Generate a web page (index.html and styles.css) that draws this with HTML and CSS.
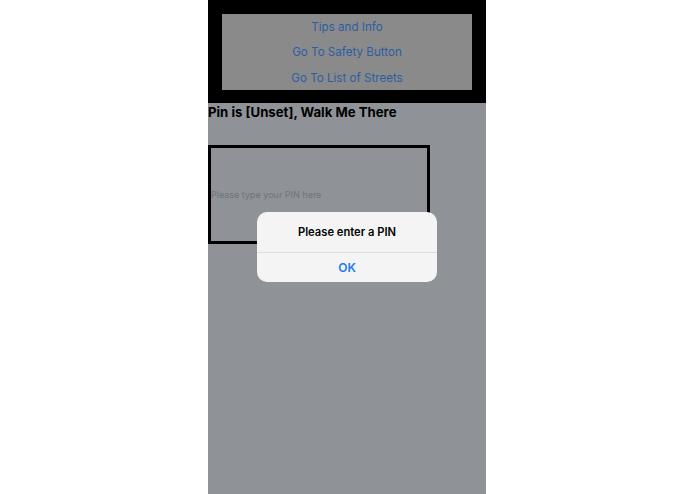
FILE: index.html
```html
<!DOCTYPE html>
<html lang="en">
<head>
<meta charset="utf-8">
<title>Walk Me There</title>
<link rel="stylesheet" href="styles.css">
</head>
<body>
<div class="phone">
  <header class="topbar">
    <nav class="menu">
      <a class="menu-item" href="#">Tips and Info</a>
      <a class="menu-item" href="#">Go To Safety Button</a>
      <a class="menu-item" href="#">Go To List of Streets</a>
    </nav>
  </header>
  <main class="content">
    <h1 class="title">Pin is [Unset], Walk Me There</h1>
    <div class="pin-box">
      <input class="pin-input" type="text" placeholder="Please type your PIN here">
    </div>
  </main>
  <div class="overlay">
    <div class="alert">
      <div class="alert-title">Please enter a PIN</div>
      <div class="alert-action">OK</div>
    </div>
  </div>
</div>
</body>
</html>
```

FILE: styles.css
```css
html, body {
  margin: 0;
  padding: 0;
  background: #ffffff;
  height: 100%;
}

body {
  font-family: Inter, "Liberation Sans", sans-serif;
}

.phone {
  position: relative;
  width: 278px;
  height: 494px;
  margin-left: 208px;
  background: #8f9397;
  display: flex;
  flex-direction: column;
  overflow: hidden;
}

.topbar {
  background: #000000;
  padding: 14px 14px 13px 14px;
}

.menu {
  background: #8a8a8a;
  height: 76px;
  display: flex;
  flex-direction: column;
}

.menu-item {
  flex: 1;
  display: flex;
  align-items: center;
  justify-content: center;
  color: #2c5ea3;
  text-decoration: none;
  font-size: 11.6px;
  padding-top: 1px;
}

.content {
  flex: 1;
}

.title {
  margin: 0;
  height: 19px;
  line-height: 19px;
  font-size: 13.2px;
  font-weight: 700;
  color: #000000;
}

.pin-box {
  margin-top: 23px;
  width: 222px;
  height: 99px;
  box-sizing: border-box;
  border: 3px solid #000000;
  display: flex;
  align-items: center;
}

.pin-input {
  width: 100%;
  border: none;
  background: transparent;
  outline: none;
  font-family: Inter, "Liberation Sans", sans-serif;
  font-size: 9px;
  padding: 0;
  margin-top: -1px;
}

.pin-input::placeholder {
  color: #6f7377;
}

.overlay {
  position: absolute;
  inset: 0;
  display: flex;
  align-items: center;
  justify-content: center;
}

.alert {
  width: 180px;
  border-radius: 10px;
  background: #f4f4f4;
  overflow: hidden;
  display: flex;
  flex-direction: column;
}

.alert-title {
  height: 40px;
  display: flex;
  align-items: center;
  justify-content: center;
  font-size: 11.2px;
  font-weight: 600;
  color: #000000;
  border-bottom: 1px solid #dcdcdc;
}

.alert-action {
  height: 29px;
  display: flex;
  align-items: center;
  justify-content: center;
  font-size: 12px;
  font-weight: 600;
  color: #1a7cf0;
}
```
